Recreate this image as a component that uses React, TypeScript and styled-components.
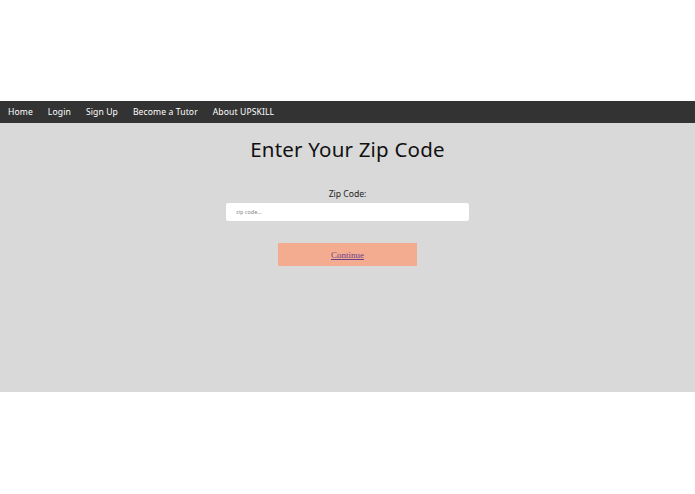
import React from "react";
import styled, { createGlobalStyle } from "styled-components";

const GlobalStyle = createGlobalStyle`
  body {
    margin: 0;
    background: #ffffff;
    font-family: "Noto Sans", "Open Sans", sans-serif;
  }
`;

const Page = styled.div`
  padding-top: 101px;
  padding-bottom: 102px;
`;

const NavBar = styled.nav`
  display: flex;
  align-items: center;
  gap: 15px;
  height: 22px;
  padding: 0 8px;
  background: #333333;
`;

const NavLink = styled.a`
  color: #ffffff;
  font-size: 8.6px;
  text-decoration: none;
  letter-spacing: 0.1px;
`;

const Main = styled.main`
  display: flex;
  flex-direction: column;
  align-items: center;
  height: 269px;
  background: #d9d9d9;
  box-sizing: border-box;
  padding-top: 13px;
`;

const Title = styled.h1`
  margin: 0;
  font-size: 20.5px;
  line-height: 26px;
  font-weight: 400;
  color: #111111;
  letter-spacing: 0.2px;
`;

const Form = styled.form`
  display: flex;
  flex-direction: column;
  align-items: center;
  margin-top: 26px;
`;

const Label = styled.label`
  font-size: 8.6px;
  line-height: 12px;
  color: #222222;
  margin-bottom: 3px;
`;

const ZipInput = styled.input`
  width: 243px;
  height: 18px;
  box-sizing: border-box;
  border: none;
  border-radius: 2px;
  background: #ffffff;
  padding: 0 10px;
  font-size: 5.5px;
  font-family: "Noto Sans", sans-serif;
  &::placeholder {
    color: #888888;
  }
`;

const ContinueButton = styled.div`
  display: flex;
  align-items: center;
  justify-content: center;
  width: 139px;
  height: 23px;
  margin-top: 22px;
  background: #f4ac91;
`;

const ContinueLink = styled.a`
  font-family: "Liberation Serif", serif;
  font-size: 9px;
  color: #6a3f8a;
  text-decoration: underline;
`;

const App = () => {
  return (
    <Page>
      <GlobalStyle />
      <NavBar>
        <NavLink href="#">Home</NavLink>
        <NavLink href="#">Login</NavLink>
        <NavLink href="#">Sign Up</NavLink>
        <NavLink href="#">Become a Tutor</NavLink>
        <NavLink href="#">About UPSKILL</NavLink>
      </NavBar>
      <Main>
        <Title>Enter Your Zip Code</Title>
        <Form onSubmit={(e) => e.preventDefault()}>
          <Label htmlFor="zip">Zip Code:</Label>
          <ZipInput id="zip" placeholder="zip code..." />
          <ContinueButton>
            <ContinueLink href="#">Continue</ContinueLink>
          </ContinueButton>
        </Form>
      </Main>
    </Page>
  );
};

export default App;
